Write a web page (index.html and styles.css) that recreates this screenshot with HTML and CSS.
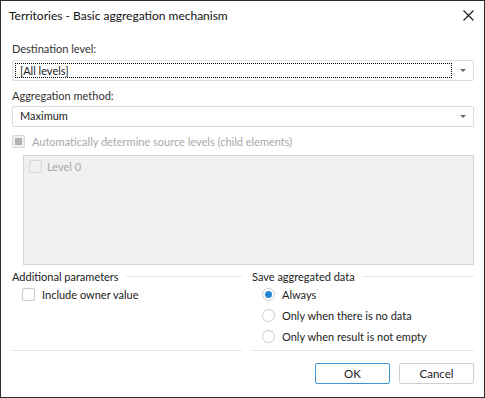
FILE: index.html
```html
<!DOCTYPE html>
<html lang="en">
<head>
    <meta charset="UTF-8">
    <title>Territories - Basic aggregation mechanism</title>
    <link rel="stylesheet" href="styles.css">
</head>
<body>

<div class="dialog">
    <div class="titlebar">
        <span class="title">Territories - Basic aggregation mechanism</span>
        <svg class="close" width="11" height="11" viewBox="0 0 11 11">
            <path d="M0.5 0.5 L10.5 10.5 M10.5 0.5 L0.5 10.5" stroke="#1a1a1a" stroke-width="1.1" fill="none"/>
        </svg>
    </div>

    <div class="content">
        <div class="field-label">Destination level:</div>
        <div class="combo first">
            <span class="combo-text focused">[All levels]</span>
            <span class="combo-arrow"></span>
        </div>

        <div class="field-label second">Aggregation method:</div>
        <div class="combo">
            <span class="combo-text">Maximum</span>
            <span class="combo-arrow"></span>
        </div>

        <div class="check-row disabled auto">
            <span class="checkbox mixed"></span>
            <span>Automatically determine source levels (child elements)</span>
        </div>

        <div class="levels-panel">
            <div class="check-row disabled level">
                <span class="checkbox"></span>
                <span>Level 0</span>
            </div>
        </div>

        <div class="groups">
            <div class="group">
                <div class="group-header"><span>Additional parameters</span><span class="rule"></span></div>
                <div class="option-row">
                    <span class="checkbox"></span>
                    <span>Include owner value</span>
                </div>
                <div class="option-row"></div>
                <div class="option-row"></div>
                <div class="separator"></div>
            </div>
            <div class="group">
                <div class="group-header"><span>Save aggregated data</span><span class="rule"></span></div>
                <div class="option-row">
                    <span class="radio checked"></span>
                    <span>Always</span>
                </div>
                <div class="option-row">
                    <span class="radio"></span>
                    <span>Only when there is no data</span>
                </div>
                <div class="option-row">
                    <span class="radio"></span>
                    <span>Only when result is not empty</span>
                </div>
                <div class="separator"></div>
            </div>
        </div>

        <div class="buttons">
            <button class="btn default">OK</button>
            <button class="btn">Cancel</button>
        </div>
    </div>
</div>

</body>
</html>
```

FILE: styles.css
```css
body {
    margin: 0;
    padding: 0;
    background: #ffffff;
    font-family: Lato, 'Noto Sans', sans-serif;
    font-size: 11px;
    color: #222222;
}
.dialog {
    width: 485px;
    height: 398px;
    box-sizing: border-box;
    border: 1px solid #2b2b2b;
    background: #ffffff;
}
.titlebar {
    height: 29px;
    display: flex;
    align-items: center;
    justify-content: space-between;
    padding: 0 10px 0 8px;
}
.title {
    font-size: 12px;
    color: #111111;
}
.close {
    display: block;
}
.content {
    padding: 11px 10px 0 11px;
}
.field-label {
    height: 16px;
    line-height: 16px;
    color: #333333;
}
.field-label.second {
    margin-top: 7px;
}
.combo {
    margin-top: 3px;
    height: 21px;
    box-sizing: border-box;
    border: 1px solid #dcdcdc;
    border-radius: 2px;
    display: flex;
    align-items: center;
    padding-left: 2px;
}
.field-label.second + .combo {
    margin-top: 2px;
}
.combo-text {
    flex: 1;
    height: 15px;
    line-height: 13px;
    box-sizing: border-box;
    padding-left: 5px;
    color: #222222;
}
.combo-text.focused {
    border: 1px dotted #000000;
    padding-left: 4px;
}
.combo-arrow {
    width: 21px;
    display: flex;
    justify-content: center;
}
.combo-arrow::after {
    content: "";
    border-left: 3px solid transparent;
    border-right: 3px solid transparent;
    border-top: 3px solid #6a6a6a;
}
.check-row {
    height: 16px;
    display: flex;
    align-items: center;
    gap: 7px;
}
.check-row.auto {
    margin-top: 6px;
}
.disabled {
    color: #a8a8a8;
}
.checkbox {
    width: 13px;
    height: 13px;
    box-sizing: border-box;
    border: 1px solid #c8c8c8;
    border-radius: 2px;
    background: #ffffff;
    display: flex;
    align-items: center;
    justify-content: center;
    flex: none;
}
.disabled .checkbox {
    border-color: #d8d8d8;
    background: #f0f0f0;
}
.checkbox.mixed::after {
    content: "";
    width: 7px;
    height: 7px;
    background: #b4b4b4;
}
.levels-panel {
    margin: 6px 0 0 11px;
    height: 110px;
    box-sizing: border-box;
    border: 1px solid #d4d4d4;
    background: #f0f0f0;
    padding: 2px 5px;
}
.level {
    gap: 5px;
}
.groups {
    margin-top: 4px;
    display: grid;
    grid-template-columns: 230px 1fr;
    column-gap: 10px;
}
.group-header {
    height: 15px;
    line-height: 15px;
    display: flex;
    align-items: center;
    gap: 7px;
    color: #222222;
}
.rule {
    flex: 1;
    height: 1px;
    background: #e6e6e6;
}
.option-row {
    height: 21px;
    display: flex;
    align-items: center;
    gap: 7px;
    padding-left: 10px;
}
.radio {
    width: 13px;
    height: 13px;
    box-sizing: border-box;
    border: 1px solid #cccccc;
    border-radius: 50%;
    display: flex;
    align-items: center;
    justify-content: center;
    flex: none;
}
.radio.checked::after {
    content: "";
    width: 7px;
    height: 7px;
    border-radius: 50%;
    background: #1f87d6;
}
.separator {
    margin-top: 3px;
    height: 1px;
    background: #e6e6e6;
}
.buttons {
    margin-top: 12px;
    display: flex;
    justify-content: flex-end;
    gap: 9px;
}
.btn {
    width: 75px;
    height: 21px;
    box-sizing: border-box;
    border: 1px solid #d0d0d0;
    border-radius: 2px;
    background: #ffffff;
    font-family: inherit;
    font-size: 11.5px;
    color: #222222;
    padding: 0;
}
.btn.default {
    border-color: #3d97d6;
}
```
